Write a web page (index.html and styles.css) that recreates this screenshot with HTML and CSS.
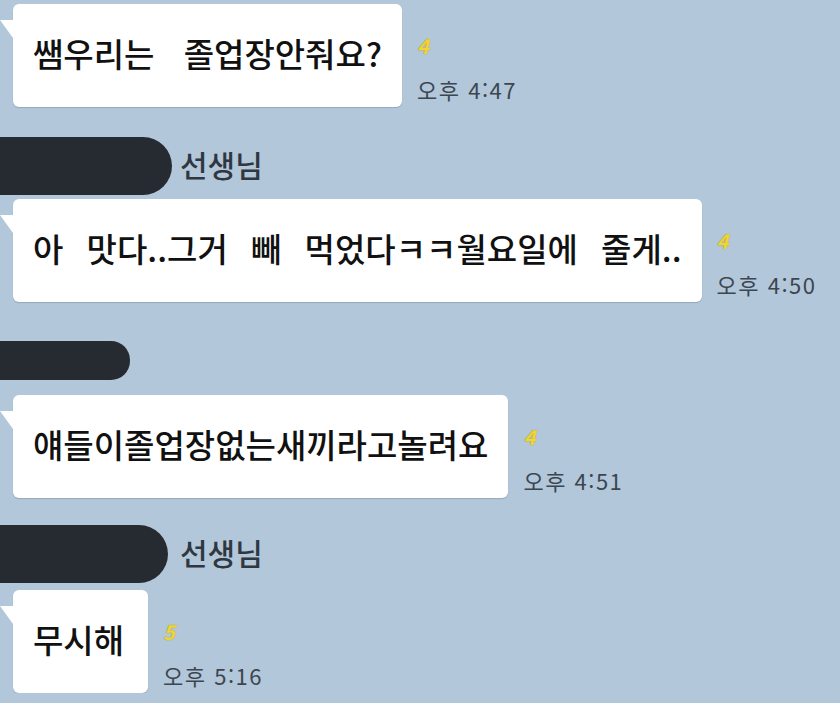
FILE: index.html
```html
<!DOCTYPE html>
<html lang="ko">
<head>
    <meta charset="UTF-8">
    <meta name="viewport" content="width=device-width, initial-scale=1.0">
    <title>채팅</title>
    <link rel="stylesheet" href="styles.css">
</head>
<body>
    <div class="chat">
        <div class="message first">
            <div class="bubble">쌤우리는 졸업장안줘요?</div>
            <div class="meta">
                <span class="unread">4</span>
                <span class="time">오후 4:47</span>
            </div>
        </div>

        <div class="sender big">
            <div class="hidden-name" style="width: 172px"></div>
            <span class="name">선생님</span>
        </div>
        <div class="message">
            <div class="bubble wide">아 맛다..그거 빼 먹었다ㅋㅋ월요일에 줄게..</div>
            <div class="meta">
                <span class="unread">4</span>
                <span class="time">오후 4:50</span>
            </div>
        </div>

        <div class="sender small">
            <div class="hidden-name" style="width: 130px"></div>
        </div>
        <div class="message">
            <div class="bubble">얘들이졸업장없는새끼라고놀려요</div>
            <div class="meta">
                <span class="unread">4</span>
                <span class="time">오후 4:51</span>
            </div>
        </div>

        <div class="sender big last">
            <div class="hidden-name" style="width: 168px"></div>
            <span class="name">선생님</span>
        </div>
        <div class="message">
            <div class="bubble short">무시해</div>
            <div class="meta">
                <span class="unread">5</span>
                <span class="time">오후 5:16</span>
            </div>
        </div>
    </div>
</body>
</html>
```

FILE: styles.css
```css
body {
    margin: 0;
    background-color: #b2c7da;
    font-family: "Noto Sans CJK KR", "Noto Sans", sans-serif;
    color: #111;
}
.chat {
    display: flex;
    flex-direction: column;
    padding-top: 4px;
}
.message {
    display: flex;
    align-items: stretch;
    padding-left: 13px;
}
.bubble {
    position: relative;
    background-color: #fff;
    border-radius: 6px;
    height: 103px;
    box-sizing: border-box;
    padding: 0 20px 5px;
    display: flex;
    align-items: center;
    font-size: 33px;
    font-weight: 500;
    word-spacing: 20px;
    white-space: nowrap;
    box-shadow: 0 1px 1px rgba(60, 80, 100, 0.25);
}
.bubble.wide {
    word-spacing: 14px;
}
.bubble.short {
    padding-right: 24px;
}
.bubble::before {
    content: "";
    position: absolute;
    left: -13px;
    top: 16px;
    width: 13px;
    height: 18px;
    background-color: #fff;
    clip-path: polygon(0 0, 100% 0, 100% 100%);
}
.meta {
    display: flex;
    flex-direction: column;
    justify-content: flex-end;
    margin-left: 15px;
    padding-bottom: 4px;
}
.unread {
    color: #f1d530;
    font-size: 20px;
    line-height: 22px;
    font-weight: 700;
    font-style: italic;
    text-shadow: 0 0 1px #9c8818;
    margin-bottom: 18px;
}
.time {
    color: #3d4650;
    font-size: 22px;
    line-height: 28px;
    letter-spacing: 1.5px;
}
.sender {
    display: flex;
    align-items: center;
    gap: 8px;
}
.sender.big {
    margin-top: 30px;
    margin-bottom: 4px;
}
.sender.big .hidden-name {
    height: 58px;
    border-radius: 0 29px 29px 0;
}
.sender.small {
    margin-top: 39px;
    margin-bottom: 15px;
}
.sender.small .hidden-name {
    height: 39px;
    border-radius: 0 19px 19px 0;
}
.sender.last {
    margin-top: 27px;
    margin-bottom: 7px;
    gap: 12px;
}
.hidden-name {
    background-color: #262b31;
}
.name {
    font-size: 30px;
    color: #2f3740;
    font-weight: 500;
    margin-bottom: 4px;
}
```
